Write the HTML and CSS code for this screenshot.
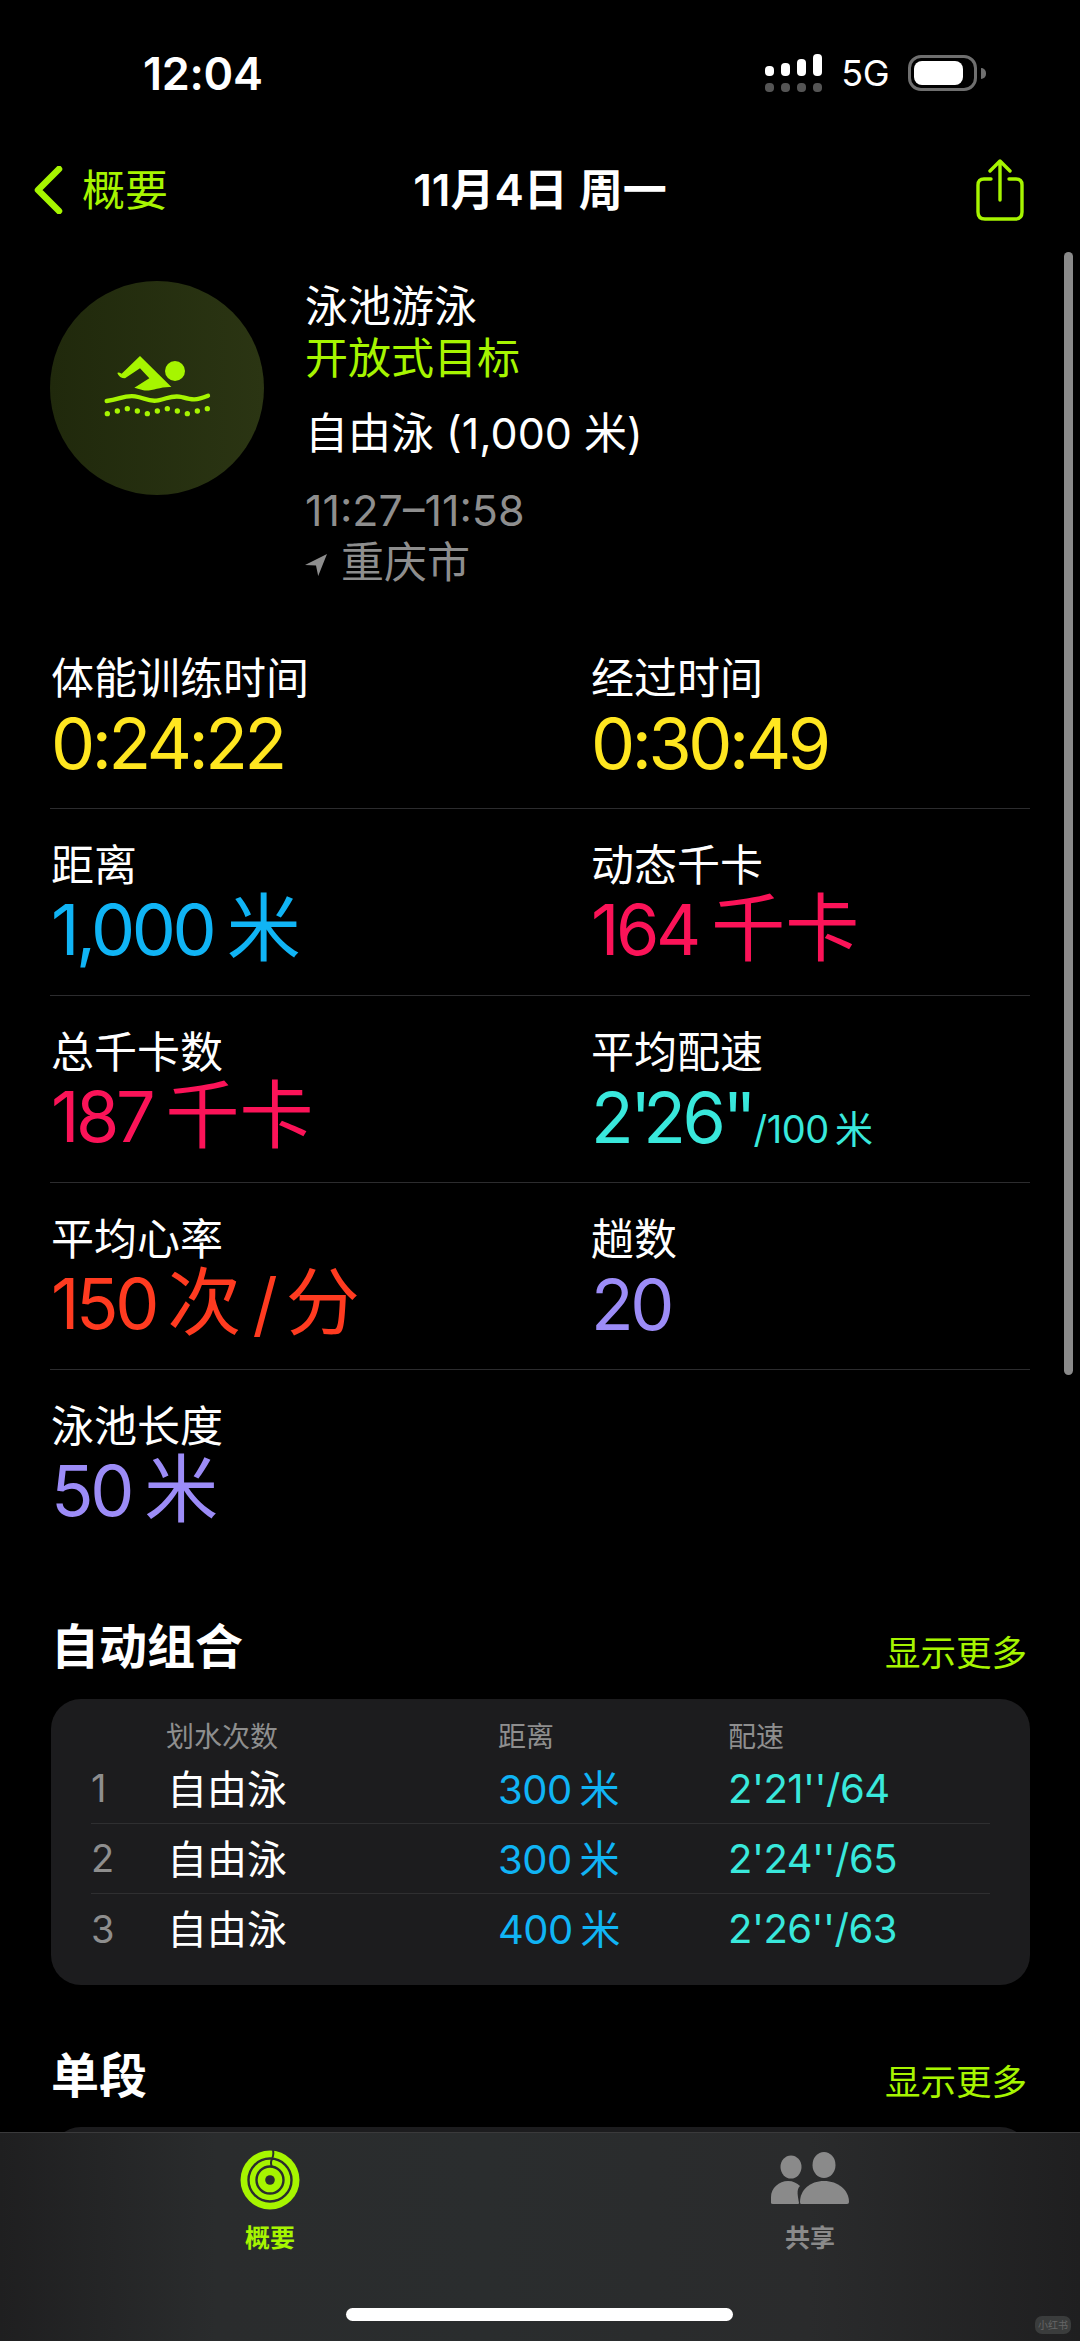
FILE: index.html
```html
<!DOCTYPE html>
<html lang="zh-CN">
<head>
<meta charset="utf-8">
<title>体能训练</title>
<link rel="stylesheet" href="styles.css">
</head>
<body>
<div class="screen">
  <div class="status">
    <span class="clock">12:04</span>
    <div class="status-right">
      <div class="signal">
        <div class="bars top"><i class="b1"></i><i class="b2"></i><i class="b3"></i><i class="b4"></i></div>
        <div class="bars low"><i></i><i></i><i></i><i></i></div>
      </div>
      <span class="net">5G</span>
      <div class="battery"><div class="cell"></div></div>
      <div class="tip"></div>
    </div>
  </div>

  <div class="nav">
    <div class="nav-left">
      <svg class="chev" width="30" height="48" viewBox="0 0 30 48"><path d="M26 3 L5 24 L26 45" fill="none" stroke="#a6f500" stroke-width="6.5" stroke-linecap="round" stroke-linejoin="round"/></svg>
      <span class="back">概要</span>
    </div>
    <div class="nav-title">11月4日 周一</div>
    <div class="nav-right">
      <svg width="48" height="62" viewBox="0 0 48 62"><path d="M15 20 H8 Q2 20 2 26 V53 Q2 60 9 60 H39 Q46 60 46 53 V26 Q46 20 40 20 H33" fill="none" stroke="#a6f500" stroke-width="3.4" stroke-linecap="round"/><path d="M24 41 V3 M14 12 L24 2 L34 12" fill="none" stroke="#a6f500" stroke-width="3.4" stroke-linecap="round" stroke-linejoin="round"/></svg>
    </div>
  </div>

  <div class="hero">
    <div class="badge">
      <svg width="160" height="110" viewBox="-9 36 480 330">
        <circle cx="285" cy="150" r="30" fill="#a6f500"/>
        <path d="M125 158 L180 105 L272 196 L274 198 C240 196 215 212 190 208 L163 200 L208 172 L180 142 L135 172 Q118 172 112 156 Q114 152 125 158 Z" fill="#a6f500"/>
        <path d="M80 240 C120 236 130 222 165 226 C195 230 205 244 235 238 C265 232 275 222 305 228 C335 236 345 240 384 224" fill="none" stroke="#a6f500" stroke-width="13" stroke-linecap="round"/>
        <g fill="#a6f500"><circle cx="82" cy="278" r="8"/><circle cx="112" cy="270" r="8"/><circle cx="142" cy="263" r="8"/><circle cx="172" cy="270" r="8"/><circle cx="202" cy="278" r="8"/><circle cx="232" cy="270" r="8"/><circle cx="262" cy="263" r="8"/><circle cx="292" cy="270" r="8"/><circle cx="322" cy="278" r="8"/><circle cx="352" cy="270" r="8"/><circle cx="382" cy="263" r="8"/></g>
      </svg>
    </div>
    <div class="hero-text">
      <div class="line">泳池游泳</div>
      <div class="line lime">开放式目标</div>
      <div class="line gap-a">自由泳 (1,000 米)</div>
      <div class="line grey gap-b time">11:27–11:58</div>
      <div class="line grey place">
        <svg width="22" height="22" viewBox="0 0 20 20"><path d="M20 0 L0 10 L10 10.5 L12 20 Z" fill="#8e8e8e"/></svg>
        <span>重庆市</span>
      </div>
    </div>
  </div>

  <div class="stats">
    <div class="stat-row">
      <div class="stat"><div class="label">体能训练时间</div><div class="value yellow">0:24:22</div></div>
      <div class="stat"><div class="label">经过时间</div><div class="value yellow">0:30:49</div></div>
    </div>
    <div class="stat-row">
      <div class="stat"><div class="label">距离</div><div class="value has-unit blue">1,000 <span class="unit">米</span></div></div>
      <div class="stat"><div class="label">动态千卡</div><div class="value has-unit pink">164 <span class="unit">千卡</span></div></div>
    </div>
    <div class="stat-row">
      <div class="stat"><div class="label">总千卡数</div><div class="value has-unit pink">187 <span class="unit">千卡</span></div></div>
      <div class="stat"><div class="label">平均配速</div><div class="value teal">2<span class="q">'</span>26<span class="q">''</span><span class="small">/100 <span class="small-unit">米</span></span></div></div>
    </div>
    <div class="stat-row">
      <div class="stat"><div class="label">平均心率</div><div class="value has-unit tight red">150 <span class="unit">次</span> / <span class="unit">分</span></div></div>
      <div class="stat"><div class="label">趟数</div><div class="value purple">20</div></div>
    </div>
    <div class="stat-row last">
      <div class="stat"><div class="label">泳池长度</div><div class="value has-unit purple">50 <span class="unit">米</span></div></div>
    </div>
  </div>

  <div class="section-head first">
    <h2>自动组合</h2>
    <span class="more">显示更多</span>
  </div>
  <div class="card">
    <div class="trow thead"><span></span><span>划水次数</span><span>距离</span><span>配速</span></div>
    <div class="trow body"><span class="num">1</span><span class="style">自由泳</span><span class="dist">300 米</span><span class="pace">2'21''/64</span></div>
    <div class="trow body"><span class="num">2</span><span class="style">自由泳</span><span class="dist">300 米</span><span class="pace">2'24''/65</span></div>
    <div class="trow body last"><span class="num">3</span><span class="style">自由泳</span><span class="dist">400 米</span><span class="pace">2'26''/63</span></div>
  </div>

  <div class="section-head second">
    <h2>单段</h2>
    <span class="more">显示更多</span>
  </div>
  <div class="card peek"></div>

  <div class="scrollbar"></div>

  <div class="tabbar">
    <div class="tab active">
      <svg width="60" height="60" viewBox="0 0 60 60">
        <circle cx="30" cy="30" r="29.5" fill="#a6f500"/>
        <circle cx="30" cy="30" r="21.5" fill="none" stroke="#2a2d2e" stroke-width="2.4"/>
        <circle cx="30" cy="30" r="13.5" fill="none" stroke="#2a2d2e" stroke-width="2.4"/>
        <circle cx="30" cy="30" r="4.8" fill="#2a2d2e"/>
        <path d="M33 0 Q34 5 32 9 Q30 13 32 17" fill="none" stroke="#2a2d2e" stroke-width="2"/>
      </svg>
      <span>概要</span>
    </div>
    <div class="tab">
      <svg width="80" height="60" viewBox="0 0 80 60">
        <ellipse cx="21" cy="17" rx="10.5" ry="11.5" fill="#8a8a8a"/>
        <ellipse cx="54" cy="15" rx="11.5" ry="13" fill="#8a8a8a"/>
        <path d="M1 53 V47 C1 38 9 31 18 31 C23 31 27 33 30 36 C26 40 28 46 29 53 Q29 54 28 54 H3 Q1 54 1 53 Z" fill="#8a8a8a"/>
        <path d="M31 54 Q30 54 30 52 C30 40 40 31 54 31 C68 31 79 40 79 52 Q79 54 77 54 Z" fill="#8a8a8a"/>
      </svg>
      <span>共享</span>
    </div>
    <div class="home"></div>
    <div class="mark">小红书</div>
  </div>
</div>
</body>
</html>
```

FILE: styles.css
```css
* { box-sizing: border-box; }
html, body { margin: 0; padding: 0; background: #000; }
body {
  font-family: "Inter", "Noto Sans CJK SC", sans-serif;
  color: #fff;
}
.screen {
  position: relative;
  width: 1080px;
  height: 2341px;
  overflow: hidden;
  background: #000;
}

/* status bar */
.status {
  height: 146px;
  display: flex;
  justify-content: space-between;
  align-items: center;
  padding: 0 94px 0 143px;
}
.clock { font-size: 45px; font-weight: 600; line-height: 1; letter-spacing: -0.3px; }
.status-right { display: flex; align-items: center; }
.signal { display: flex; flex-direction: column; gap: 7px; margin-right: 19px; }
.bars { display: flex; gap: 7px; align-items: flex-end; }
.bars i { display: block; width: 9px; border-radius: 4px; background: #fff; }
.bars.low i { height: 9px; background: #555; }
.b1 { height: 10px; }
.b2 { height: 13px; }
.b3 { height: 17px; }
.b4 { height: 22px; }
.net { font-size: 36px; font-weight: 400; margin-right: 19px; line-height: 1; letter-spacing: -0.5px; }
.battery {
  width: 69px;
  height: 36px;
  border: 3px solid #6f6f6f;
  border-radius: 13px;
  padding: 3px;
  display: flex;
}
.cell { width: 49px; background: #fff; border-radius: 8px; }
.tip { width: 5px; height: 11px; margin-left: 4px; background: #6f6f6f; border-radius: 0 6px 6px 0; }

/* nav */
.nav {
  height: 88px;
  display: grid;
  grid-template-columns: 1fr auto 1fr;
  align-items: center;
}
.nav-left { display: flex; align-items: center; gap: 19px; padding-left: 33px; }
.chev { display: block; }
.back { font-size: 43px; color: #a6f500; line-height: 1; }
.nav-title { font-size: 44px; font-weight: 600; line-height: 1; }
.nav-right { display: flex; justify-content: flex-end; padding-right: 56px; }

/* hero */
.hero { display: flex; gap: 41px; padding: 46px 0 0 50px; }
.badge {
  width: 214px;
  height: 214px;
  margin-top: 1px;
  border-radius: 50%;
  background: linear-gradient(90deg, #20290c, #2b3513);
  display: flex;
  align-items: center;
  justify-content: center;
}
.hero-text { font-size: 43px; }
.line { line-height: 52px; height: 52px; }
.lime { color: #a6f500; }
.grey { color: #8e8e8e; }
.gap-a { margin-top: 23px; }
.gap-b { margin-top: 25px; }
.place { display: flex; align-items: center; gap: 14px; }
.place svg { margin-top: 6px; }

/* stats */
.stats { margin: 34px 50px 0; }
.stat-row {
  display: grid;
  grid-template-columns: 540px 1fr;
  height: 187px;
  padding: 29px 0 0 1px;
  border-bottom: 1px solid #2c2c2e;
}
.stat-row.last { border-bottom: 0; height: 160px; }
.label { font-size: 43px; line-height: 54px; }
.value { font-size: 70px; line-height: 78px; white-space: nowrap; letter-spacing: -3.4px; word-spacing: -3px; }
.has-unit { margin-top: -3px; }
.tight { word-spacing: -5px; }
.unit { font-size: 74px; letter-spacing: 0; }
.q { letter-spacing: -8px; }
.small { font-size: 38px; letter-spacing: -0.5px; word-spacing: -4px; margin-left: 5px; }
.small-unit { letter-spacing: 0; }
.yellow { color: #ffe620; }
.blue { color: #10b4f5; }
.pink { color: #fb1358; }
.teal { color: #39e8dc; }
.red { color: #ff3b20; }
.purple { color: #9c8cf7; }

/* sections */
.section-head {
  height: 60px;
  display: flex;
  align-items: center;
  justify-content: space-between;
  margin: 0 53px 0 51px;
}
.section-head.first { margin-top: 87px; }
.section-head.second { margin-top: 61px; }
.section-head h2 { margin: 0; font-size: 48px; font-weight: 700; line-height: 60px; }
.more { font-size: 35.5px; color: #a6f500; padding-top: 6px; }

.card {
  margin: 22px 50px 0 51px;
  height: 286px;
  padding: 16px 40px 20px;
  background: #1c1c1e;
  border-radius: 30px;
}
.card.peek { margin-top: 21px; height: 300px; }
.trow {
  display: grid;
  grid-template-columns: 75px 332px 230px 1fr;
  align-items: center;
}
.thead { height: 39px; font-size: 28px; color: #8e8e8e; }
.trow.body { height: 70px; font-size: 40px; border-bottom: 1px solid #2f2f31; padding-bottom: 4px; }
.trow.body.last { border-bottom: 0; }
.num { color: #8e8e8e; font-size: 38px; padding-top: 3px; }
.style { padding-left: 1px; }
.dist { color: #10b4f5; word-spacing: -3px; letter-spacing: -0.5px; }
.pace { color: #39e8dc; letter-spacing: -0.5px; padding-top: 3px; }

/* scrollbar */
.scrollbar {
  position: absolute;
  top: 252px;
  left: 1064px;
  width: 9px;
  height: 1123px;
  border-radius: 5px;
  background: #8a8a8a;
}

/* tab bar */
.tabbar {
  position: absolute;
  left: 0;
  right: 0;
  bottom: 0;
  height: 209px;
  display: grid;
  grid-template-columns: 540px 540px;
  background: linear-gradient(90deg, #1f1f20 0, #2a2c2d 20%, #2a2d2e 45%, #2a2b2c 75%, #1f1f20 100%);
  border-top: 1px solid #3a3a3b;
}
.tab {
  display: flex;
  flex-direction: column;
  align-items: center;
  padding-top: 17px;
  font-size: 25px;
  font-weight: 700;
  color: #8a8a8a;
}
.tab span { line-height: 34px; margin-top: 11px; }
.tab svg { display: block; }
.tab.active { color: #a6f500; }
.home {
  position: absolute;
  left: 346px;
  top: 175px;
  width: 387px;
  height: 13px;
  border-radius: 7px;
  background: #fff;
}
.mark {
  position: absolute;
  left: 1035px;
  top: 183px;
  width: 36px;
  height: 18px;
  border-radius: 7px;
  background: #3a3c3c;
  color: #666;
  font-size: 10px;
  line-height: 18px;
  text-align: center;
}
```
